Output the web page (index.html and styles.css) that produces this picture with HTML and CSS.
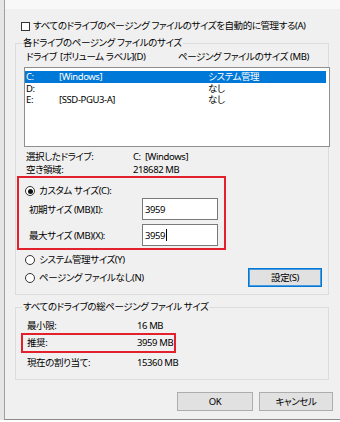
FILE: index.html
```html
<!DOCTYPE html>
<html lang="ja">
<head>
<meta charset="utf-8">
<link rel="stylesheet" href="styles.css">
</head>
<body>
<div class="screen">
  <div class="side"></div>
  <div class="dialog">
    <div class="topstrip"></div>
    <div class="check-row"><span class="checkbox"></span><span class="txt">すべてのドライブのページング ファイルのサイズを自動的に管理する(A)</span></div>
    <fieldset class="group g1">
      <legend>各ドライブのページング ファイルのサイズ</legend>
      <div class="head"><span class="h1">ドライブ</span><span class="h2">[ボリューム ラベル](D)</span><span>ページング ファイルのサイズ (MB)</span></div>
      <div class="listbox">
        <div class="lrow sel"><span class="c1">C:</span><span class="c2">[Windows]</span><span>システム管理</span></div>
        <div class="lrow"><span class="c1">D:</span><span class="c2"></span><span>なし</span></div>
        <div class="lrow"><span class="c1">E:</span><span class="c2">[SSD-PGU3-A]</span><span>なし</span></div>
      </div>
      <div class="info">
        <div class="irow"><span class="ilabel">選択したドライブ:</span><span>C:&nbsp;&nbsp;[Windows]</span></div>
        <div class="irow"><span class="ilabel">空き領域:</span><span>218682 MB</span></div>
      </div>
      <div class="custom">
        <div class="radio-row"><span class="radio checked"></span><span>カスタム サイズ(C):</span></div>
        <div class="frow"><span class="flabel">初期サイズ (MB)(I):</span><div class="field">3959</div></div>
        <div class="frow second"><span class="flabel">最大サイズ (MB)(X):</span><div class="field">3959<span class="caret"></span></div></div>
      </div>
      <div class="lower">
        <div class="radios">
          <div class="radio-row"><span class="radio"></span><span>システム管理サイズ(Y)</span></div>
          <div class="radio-row"><span class="radio"></span><span>ページング ファイルなし(N)</span></div>
        </div>
        <div class="btn set">設定(S)</div>
      </div>
    </fieldset>
    <fieldset class="group g2">
      <legend>すべてのドライブの総ページング ファイル サイズ</legend>
      <div class="trow"><span class="tlabel">最小限:</span><span>16 MB</span></div>
      <div class="trow rec"><span class="tlabel">推奨:</span><span>3959 MB</span></div>
      <div class="trow last"><span class="tlabel">現在の割り当て:</span><span>15360 MB</span></div>
    </fieldset>
    <div class="buttons">
      <div class="btn ok">OK</div>
      <div class="btn cancel">キャンセル</div>
    </div>
  </div>
</div>
<div class="bottomstrip"></div>
</body>
</html>
```

FILE: styles.css
```css
html, body {
  margin: 0;
  padding: 0;
}
body {
  width: 340px;
  height: 422px;
  overflow: hidden;
  background: #ffffff;
  font-family: "Noto Sans", "Noto Sans CJK JP", sans-serif;
  font-size: 9.5px;
  letter-spacing: -0.4px;
  font-feature-settings: "palt";
  color: #000000;
}
.screen {
  display: flex;
  height: 420px;
}
.side {
  width: 4px;
  background: #e6e6e6;
}
.dialog {
  flex: 1;
  min-width: 0;
  overflow: hidden;
  box-sizing: border-box;
  height: 420px;
  background: #f0f0f0;
  border-left: 1px solid #a0a0a0;
  border-bottom: 1px solid #8a8a8a;
}
.topstrip {
  height: 9px;
  background: #f8f8f8;
}
.bottomstrip {
  height: 2px;
  background: #ffffff;
}
.check-row {
  margin-top: 10px;
  height: 14px;
  line-height: 14px;
  display: flex;
  align-items: center;
  padding-left: 16px;
  white-space: nowrap;
}
.checkbox {
  width: 9px;
  height: 9px;
  box-sizing: border-box;
  border: 1px solid #333333;
  background: #ffffff;
  margin-right: 3px;
}
.group {
  box-sizing: border-box;
  width: 314px;
  min-width: 0;
  margin: 3px 0 0 10px;
  border: 1px solid #dcdcdc;
  padding: 0 6px 7px 8px;
}
.group legend {
  padding: 0 1px;
  margin-left: -2px;
  line-height: 14px;
  white-space: nowrap;
}
.g2 {
  margin-top: 5px;
  padding-top: 5px;
  padding-bottom: 9px;
}
.head {
  display: flex;
  height: 14px;
  line-height: 14px;
  padding-left: 2px;
  white-space: nowrap;
}
.h1 { width: 34px; }
.h2 { width: 118px; }
.listbox {
  box-sizing: border-box;
  width: 306px;
  height: 80px;
  margin-top: 3px;
  background: #ffffff;
  border: 1px solid #8f8f8f;
  padding-top: 3px;
}
.lrow {
  display: flex;
  height: 11.5px;
  line-height: 11.5px;
  margin-right: 3px;
  padding-left: 1px;
  white-space: nowrap;
}
.lrow.sel {
  background: #0078d7;
  color: #ffffff;
}
.c1 { width: 33px; }
.c2 { width: 149px; }
.info {
  margin-top: 4px;
}
.irow {
  display: flex;
  height: 12.5px;
  line-height: 12.5px;
  padding-left: 2px;
  white-space: nowrap;
}
.ilabel { width: 107px; }
.custom {
  box-sizing: border-box;
  width: 209px;
  height: 74px;
  margin-left: -7px;
  border: 2px solid #e3212d;
  padding: 6px 0 2px 6px;
}
.radio-row {
  display: flex;
  align-items: center;
  height: 14px;
  line-height: 14px;
  white-space: nowrap;
}
.radio {
  width: 10px;
  height: 10px;
  box-sizing: border-box;
  border: 1px solid #333333;
  border-radius: 50%;
  background: #ffffff;
  margin-right: 4px;
  display: flex;
  align-items: center;
  justify-content: center;
}
.radio.checked::after {
  content: "";
  width: 5px;
  height: 5px;
  border-radius: 50%;
  background: #111111;
}
.frow {
  display: flex;
  align-items: center;
  height: 22px;
  padding-left: 4px;
  white-space: nowrap;
}
.frow.second {
  margin-top: 4px;
}
.flabel {
  width: 113px;
}
.field {
  box-sizing: border-box;
  width: 76px;
  height: 22px;
  border: 1px solid #7a7a7a;
  background: #ffffff;
  padding-left: 2px;
  line-height: 19px;
  display: flex;
  align-items: center;
}
.caret {
  display: inline-block;
  width: 1px;
  height: 12px;
  background: #000000;
  margin-left: 0.5px;
}
.lower {
  display: flex;
  justify-content: space-between;
  align-items: flex-start;
  margin-top: 3px;
}
.radios {
  display: flex;
  flex-direction: column;
  gap: 4px;
  padding-left: 1px;
}
.btn {
  box-sizing: border-box;
  height: 19px;
  line-height: 17px;
  text-align: center;
  background: #e1e1e1;
  border: 1px solid #adadad;
  white-space: nowrap;
}
.btn.set {
  width: 74px;
  margin-top: 15px;
  border-color: #0078d7;
  box-shadow: inset 0 0 0 1px #4a9ae0;
}
.trow {
  display: flex;
  height: 14px;
  line-height: 14px;
  padding-left: 3px;
  white-space: nowrap;
}
.tlabel { width: 110px; }
.trow.rec {
  box-sizing: border-box;
  width: 155px;
  height: 20px;
  line-height: 16px;
  margin-left: -3px;
  border: 2px solid #e3212d;
  padding-left: 4px;
}
.trow.last {
  margin-top: 3px;
}
.buttons {
  display: flex;
  justify-content: flex-end;
  gap: 6px;
  margin-top: 12px;
  padding-right: 7px;
}
.btn.ok { width: 76px; }
.btn.cancel { width: 74px; }
```
